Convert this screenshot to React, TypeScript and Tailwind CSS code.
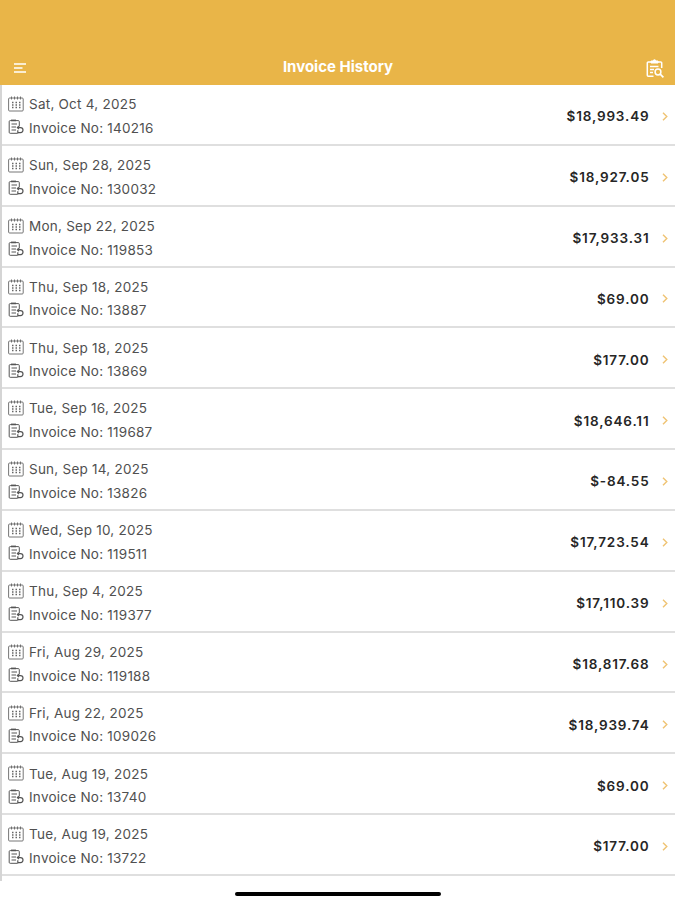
import React from 'react';

interface Invoice {
    date: string;
    number: string;
    total: string;
}

const invoices: Invoice[] = [
    { date: 'Sat, Oct 4, 2025', number: '140216', total: '18,993.49' },
    { date: 'Sun, Sep 28, 2025', number: '130032', total: '18,927.05' },
    { date: 'Mon, Sep 22, 2025', number: '119853', total: '17,933.31' },
    { date: 'Thu, Sep 18, 2025', number: '13887', total: '69.00' },
    { date: 'Thu, Sep 18, 2025', number: '13869', total: '177.00' },
    { date: 'Tue, Sep 16, 2025', number: '119687', total: '18,646.11' },
    { date: 'Sun, Sep 14, 2025', number: '13826', total: '-84.55' },
    { date: 'Wed, Sep 10, 2025', number: '119511', total: '17,723.54' },
    { date: 'Thu, Sep 4, 2025', number: '119377', total: '17,110.39' },
    { date: 'Fri, Aug 29, 2025', number: '119188', total: '18,817.68' },
    { date: 'Fri, Aug 22, 2025', number: '109026', total: '18,939.74' },
    { date: 'Tue, Aug 19, 2025', number: '13740', total: '69.00' },
    { date: 'Tue, Aug 19, 2025', number: '13722', total: '177.00' },
];

function CalendarIcon() {
    return (
        <svg className="mb-[2px] h-4 w-4 shrink-0" viewBox="0 0 16 16" fill="none" stroke="#666" strokeWidth="0.9">
            <rect x="0.6" y="2" width="14.6" height="13" rx="1" />
            <path d="M3.5 0.5v3M6.5 0.5v3M9.5 0.5v3M12.5 0.5v3" />
            <path d="M4 6.5h8.5M4 9h8.5M4 11.5h8.5" strokeWidth="1.4" strokeDasharray="1.5 2" />
        </svg>
    );
}

function InvoiceIcon() {
    return (
        <svg className="mb-[3px] h-4 w-4 shrink-0" viewBox="0 0 16 16" fill="none" stroke="#555" strokeWidth="1">
            <path d="M9.5 14.3H2.2a1 1 0 0 1-1-1V2.6a1 1 0 0 1 1-1h8.1a1 1 0 0 1 1 1V7.5" />
            <path d="M3 1.4h5" strokeWidth="1.6" />
            <path d="M3.5 5h5.5M3.5 8H8M3.5 11H8" />
            <path d="M10.3 8.6h2.2a2.5 2.5 0 0 1 0 5H9.8M10.8 7.2 9.4 8.6l1.4 1.4M9.8 11.2v3.2" strokeWidth="1.2" />
        </svg>
    );
}

function ClipboardSearchIcon() {
    return (
        <svg className="h-5 w-5" viewBox="0 0 20 20" fill="none" stroke="#fff" strokeWidth="1.5">
            <path d="M8.5 17.2H3.3a1 1 0 0 1-1-1V4a1 1 0 0 1 1-1h12.4a1 1 0 0 1 1 1v5" />
            <path d="M6 4V2h2.2a1.3 1.3 0 0 1 2.6 0H13v2Z" fill="#fff" strokeWidth="1" />
            <path d="M5 7.5h8.5M5 10.5h4M5 13.5h3" strokeWidth="1.3" />
            <circle cx="13" cy="13" r="2.9" />
            <path d="m15.2 15.2 3.2 3.2" strokeWidth="1.7" />
        </svg>
    );
}

function InvoiceRow({ invoice }: { invoice: Invoice }) {
    return (
        <li className="flex h-[60.85px] items-center justify-between border-b-2 border-[#dfdfdf] pl-[6px] pr-[7px] pt-[4px]">
            <div className="pt-px text-[13.5px] leading-[23.7px] tracking-[0.24px] text-[#505050]">
                <div className="flex items-center gap-[5px]">
                    <CalendarIcon />
                    <span>{invoice.date}</span>
                </div>
                <div className="flex items-center gap-[5px]">
                    <InvoiceIcon />
                    <span>Invoice No: {invoice.number}</span>
                </div>
            </div>
            <div className="flex items-center gap-[12.5px]">
                <span className="text-[13.5px] font-semibold tracking-[0.85px] text-[#262626]">${invoice.total}</span>
                <svg className="h-[9px] w-[6px]" viewBox="0 0 6 9" fill="none" stroke="#efc373" strokeWidth="1.4">
                    <path d="m1 0.7 3.8 3.8L1 8.3" />
                </svg>
            </div>
        </li>
    );
}

export default function App() {
    return (
        <div className="flex h-[900px] w-[675px] flex-col overflow-hidden bg-white font-['Inter',sans-serif]">
            <header className="flex h-[85px] shrink-0 items-end justify-between bg-[#e9b548] pb-[6px] pl-[13px] pr-[10px]">
                <svg className="mb-[6px] h-[10px] w-[20px]" viewBox="0 0 20 10" stroke="#fff" strokeWidth="1.3">
                    <path d="M1 1h12M1 5h8.5M1 9h12" />
                </svg>
                <h1 className="pr-[2px] text-[15px] font-bold leading-[24px] text-white">Invoice History</h1>
                <ClipboardSearchIcon />
            </header>
            <ul className="h-[796px] shrink-0 border-l-2 border-[#d5d5d5]">
                {invoices.map((invoice) => (
                    <InvoiceRow key={invoice.number} invoice={invoice} />
                ))}
            </ul>
            <div className="mx-auto mt-[11px] h-[3.5px] w-[206px] shrink-0 rounded-full bg-black" />
        </div>
    );
}
